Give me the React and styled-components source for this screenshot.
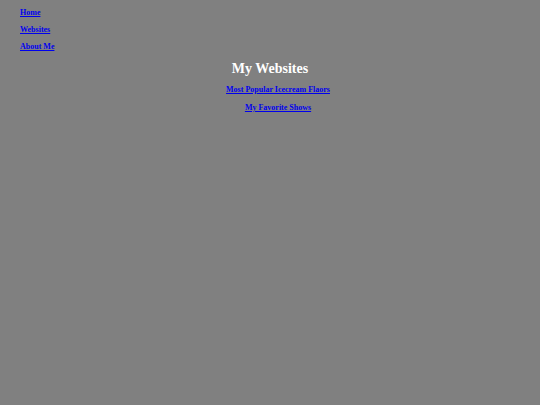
import React from 'react';
import styled, { createGlobalStyle } from 'styled-components';

const GlobalStyle = createGlobalStyle`
  html, body {
    margin: 0;
    padding: 0;
    background: #808080;
    font-family: 'Liberation Serif', 'Times New Roman', serif;
  }
`;

const Page = styled.div`
  min-height: 405px;
  padding: 0 4px;
`;

const NavList = styled.div`
  padding: 4px 0 0 16px;
`;

const NavItem = styled.p`
  margin: 0 0 8px;
  font-size: 8px;
  line-height: 9px;
  font-weight: bold;
  &:first-child {
    margin-top: 4px;
  }
`;

const Link = styled.a`
  color: #0000ee;
  text-decoration: underline;
`;

const Main = styled.div`
  text-align: center;
`;

const Title = styled.h2`
  margin: 10px 0 8px;
  font-size: 14px;
  line-height: 16px;
  color: #fff;
  font-weight: bold;
`;

const SiteList = styled.div`
  padding-left: 16px;
`;

const SiteItem = styled.p`
  margin: 0 0 9px;
  font-size: 8px;
  line-height: 9px;
  font-weight: bold;
`;

export default function App() {
  return (
    <Page>
      <GlobalStyle />
      <NavList>
        <NavItem><Link href="#">Home</Link></NavItem>
        <NavItem><Link href="#">Websites</Link></NavItem>
        <NavItem><Link href="#">About Me</Link></NavItem>
      </NavList>
      <Main>
        <Title>My Websites</Title>
        <SiteList>
          <SiteItem><Link href="#">Most Popular Icecream Flaors</Link></SiteItem>
          <SiteItem><Link href="#">My Favorite Shows</Link></SiteItem>
        </SiteList>
      </Main>
    </Page>
  );
}
